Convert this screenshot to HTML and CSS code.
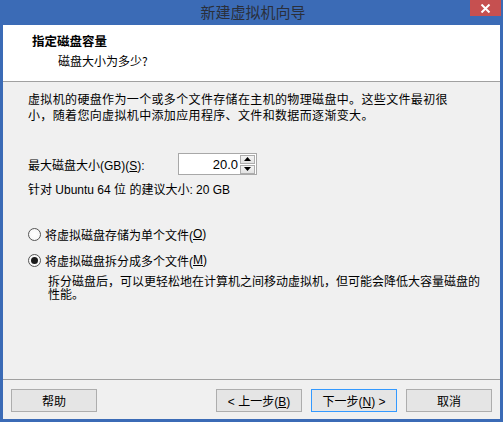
FILE: index.html
```html
<!DOCTYPE html>
<html lang="zh-CN">
<head>
<meta charset="utf-8">
<title>新建虚拟机向导</title>
<link rel="stylesheet" href="styles.css">
</head>
<body>
<div class="window">
  <div class="titlebar">
    <span class="title">新建虚拟机向导</span>
    <span class="close">
      <svg width="11" height="9" viewBox="0 0 11 9"><path d="M1.5 0.5 L9.5 8.5 M9.5 0.5 L1.5 8.5" stroke="#fff" stroke-width="2"/></svg>
    </span>
  </div>
  <div class="client">
    <div class="header">
      <div class="h-title">指定磁盘容量</div>
      <div class="h-sub">磁盘大小为多少?</div>
    </div>
    <div class="main">
      <p class="intro">虚拟机的硬盘作为一个或多个文件存储在主机的物理磁盘中。这些文件最初很<br>小，随着您向虚拟机中添加应用程序、文件和数据而逐渐变大。</p>
      <div class="size-row">
        <span class="size-label">最大磁盘大小(GB)(<u>S</u>):</span>
        <div class="spin">
          <span class="spin-val">20.0</span>
          <div class="spin-btns">
            <span class="sb"><svg width="7" height="4" viewBox="0 0 7 4"><path d="M3.5 0 L7 4 L0 4 Z" fill="#000"/></svg></span>
            <span class="sb"><svg width="7" height="4" viewBox="0 0 7 4"><path d="M0 0 L7 0 L3.5 4 Z" fill="#000"/></svg></span>
          </div>
        </div>
      </div>
      <div class="hint">针对 Ubuntu 64 位 的建议大小: 20 GB</div>
      <div class="radios">
        <label class="radio"><span class="dot"></span>将虚拟磁盘存储为单个文件(<u>O</u>)</label>
        <label class="radio"><span class="dot on"></span>将虚拟磁盘拆分成多个文件(<u>M</u>)</label>
        <p class="desc">拆分磁盘后，可以更轻松地在计算机之间移动虚拟机，但可能会降低大容量磁盘的<br>性能。</p>
      </div>
    </div>
    <div class="footer">
      <button class="btn">帮助</button>
      <div class="spacer"></div>
      <button class="btn">&lt; 上一步(<u>B</u>)</button>
      <button class="btn default">下一步(<u>N</u>) &gt;</button>
      <button class="btn">取消</button>
    </div>
  </div>
</div>
</body>
</html>
```

FILE: styles.css
```css
* { box-sizing: border-box; }
html, body { margin: 0; padding: 0; }
body {
  width: 503px;
  height: 422px;
  overflow: hidden;
  font-family: "Liberation Sans", "Noto Sans CJK SC", sans-serif;
  font-size: 12px;
  color: #000;
}
.window {
  width: 503px;
  height: 422px;
  background: #3b6bb6;
  padding: 0 3px 3px 3px;
  display: flex;
  flex-direction: column;
}
.titlebar {
  height: 25px;
  flex: none;
  position: relative;
  display: flex;
  align-items: center;
  justify-content: center;
}
.title {
  font-family: "Noto Sans CJK SC", sans-serif;
  font-size: 15px;
  color: #2a2f3a;
  line-height: 20px;
  margin-top: -2px;
  margin-left: 3px;
}
.close {
  position: absolute;
  top: 0;
  right: -1px;
  width: 31px;
  height: 16px;
  background: #c65050;
  display: flex;
  align-items: center;
  justify-content: center;
}
.client {
  flex: 1;
  background: #f0f0f0;
  display: flex;
  flex-direction: column;
}
.header {
  height: 57px;
  background: #fff;
  border-bottom: 1px solid #a0a0a0;
  padding: 8px 0 0 29px;
  flex: none;
}
.h-title {
  font-family: "Noto Sans CJK SC", sans-serif;
  font-weight: bold;
  font-size: 12.5px;
  line-height: 16px;
}
.h-sub {
  font-family: "Noto Sans CJK SC", sans-serif;
  line-height: 16px;
  margin-top: 4px;
  padding-left: 26px;
}
.main {
  flex: 1;
  padding: 10px 0 0 25px;
}
.intro {
  margin: 0;
  line-height: 16px;
  letter-spacing: 0.35px;
}
.size-row {
  display: flex;
  align-items: center;
  margin-top: 29px;
  height: 22px;
}
.size-label {
  width: 150px;
}
.spin {
  width: 79px;
  height: 22px;
  background: #fff;
  border: 1px solid #a8a8a8;
  display: flex;
  align-items: center;
  padding: 0 1px 0 0;
}
.spin-val {
  flex: 1;
  text-align: right;
  padding-right: 2px;
  font-size: 13px;
}
.spin-btns {
  display: flex;
  flex-direction: column;
  gap: 1px;
}
.sb {
  width: 15px;
  height: 9px;
  border: 1px solid #adadad;
  background: linear-gradient(#f4f4f4, #e2e2e2);
  display: flex;
  align-items: center;
  justify-content: center;
}
.hint {
  margin-top: 7px;
  line-height: 16px;
}
.radios {
  margin-top: 28px;
}
.radio {
  display: flex;
  align-items: center;
  height: 16px;
  margin-left: 0;
}
.radio + .radio { margin-top: 10px; }
.dot {
  width: 13px;
  height: 13px;
  border-radius: 50%;
  border: 1px solid #555;
  background: radial-gradient(circle, #fff 0, #f4f4f4 100%);
  margin-right: 4px;
  position: relative;
  flex: none;
}
.dot.on::after {
  content: "";
  position: absolute;
  left: 2px;
  top: 2px;
  width: 7px;
  height: 7px;
  border-radius: 50%;
  background: #1a1a1a;
}
.desc {
  margin: 8px 0 0 20px;
  line-height: 13px;
}
.footer {
  flex: none;
  height: 40px;
  border-top: 1px solid #a0a0a0;
  display: flex;
  align-items: flex-start;
  padding: 9px 8px 0 8px;
  gap: 9px;
}
.spacer { flex: 1; }
.btn {
  width: 86px;
  height: 23px;
  border: 1px solid #adadad;
  background: #e5e5e5;
  font-family: "Liberation Sans", "Noto Sans CJK SC", sans-serif;
  font-size: 12px;
  color: #000;
  padding: 0;
  margin: 0;
}
.btn.default {
  border-color: #3399ff;
}
u { text-decoration: underline; text-underline-offset: 1px; }
```
